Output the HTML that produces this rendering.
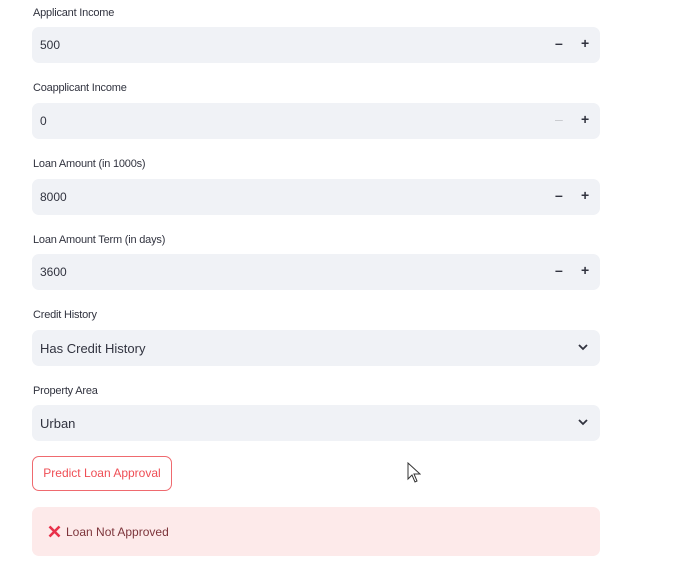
<!DOCTYPE html><html><head><style>
body{margin:0;width:681px;height:576px;background:#fff;font-family:"Liberation Sans",sans-serif;color:#31333f;position:relative;overflow:hidden}
.l{position:absolute;left:33px;font-size:11px;letter-spacing:-0.2px}
.i{position:absolute;left:32px;width:568px;height:36px;background:#f0f2f6;border-radius:7px;font-size:12px}
.i span.v{position:absolute;left:8px;top:11px}
.m,.p{position:absolute;top:8px;font-size:14px;font-weight:bold}
.m{left:523px}.p{left:549px}
.s{font-size:13px}
.chev{position:absolute;right:12px;top:12px}
</style></head><body>
<div class="l" style="top:7px">Applicant Income</div>
<div class="i" style="top:27px"><span class="v">500</span><span class="m">–</span><span class="p">+</span></div>
<div class="l" style="top:82px">Coapplicant Income</div>
<div class="i" style="top:103px"><span class="v">0</span><span class="m" style="color:#c8c9ce;font-weight:normal">–</span><span class="p">+</span></div>
<div class="l" style="top:158px">Loan Amount (in 1000s)</div>
<div class="i" style="top:179px"><span class="v">8000</span><span class="m">–</span><span class="p">+</span></div>
<div class="l" style="top:234px">Loan Amount Term (in days)</div>
<div class="i" style="top:254px"><span class="v">3600</span><span class="m">–</span><span class="p">+</span></div>
<div class="l" style="top:309px">Credit History</div>
<div class="i s" style="top:330px"><span class="v">Has Credit History</span><svg class="chev" width="10" height="10" viewBox="0 0 10 10"><path d="M1 3l4 4 4-4" fill="none" stroke="#31333f" stroke-width="1.8"/></svg></div>
<div class="l" style="top:385px">Property Area</div>
<div class="i s" style="top:405px"><span class="v">Urban</span><svg class="chev" width="10" height="10" viewBox="0 0 10 10"><path d="M1 3l4 4 4-4" fill="none" stroke="#31333f" stroke-width="1.8"/></svg></div>
<div style="position:absolute;left:32px;top:456px;width:138px;height:33px;border:1px solid #ef6a6f;border-radius:7px;color:#ef4e55;font-size:12px;line-height:33px;text-align:center">Predict Loan Approval</div>
<svg style="position:absolute;left:407px;top:462px" width="14" height="22" viewBox="0 0 14 22"><path d="M1 1v16l4-4 3 7 2-1-3-7h6z" fill="#fff" stroke="#333" stroke-width="1"/></svg>
<div style="position:absolute;left:32px;top:507px;width:568px;height:49px;background:#fdeaea;border-radius:7px"></div>
<svg style="position:absolute;left:48px;top:525px" width="13" height="13" viewBox="0 0 13 13"><path d="M1.5 1.5l10 10M11.5 1.5l-10 10" stroke="#e8304a" stroke-width="2.6"/></svg>
<div style="position:absolute;left:66px;top:525px;font-size:12px;color:#7d353b">Loan Not Approved</div>
</body></html>
